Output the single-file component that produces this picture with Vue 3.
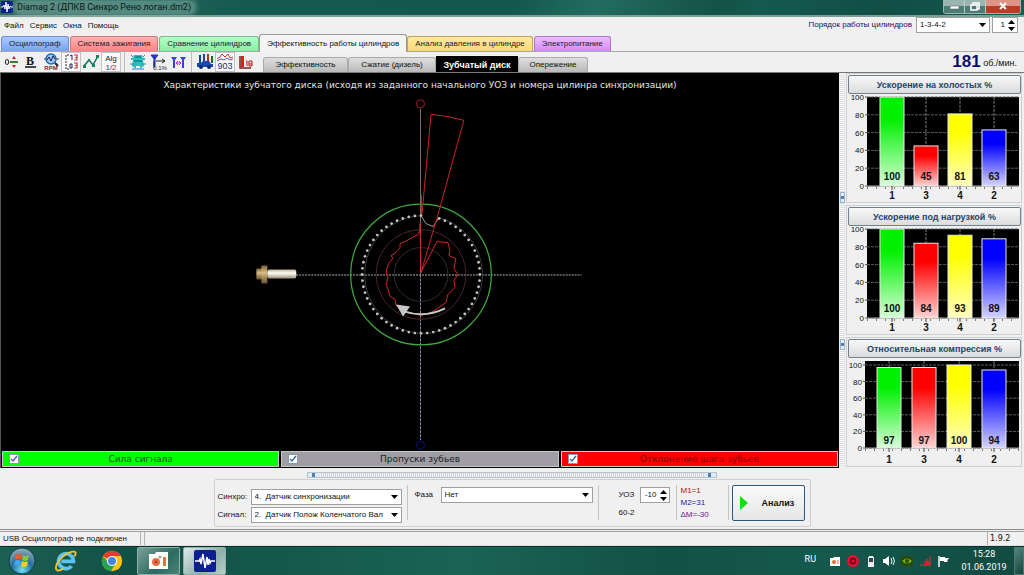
<script setup>
import { ref } from 'vue'

const mainTabs = [
  { name: 'Осциллограф', kind: 'blue' },
  { name: 'Система зажигания', kind: 'red' },
  { name: 'Сравнение цилиндров', kind: 'green' },
  { name: 'Эффективность работы цилиндров', kind: 'active' },
  { name: 'Анализ давления в цилиндре', kind: 'gold' },
  { name: 'Электропитание', kind: 'violet' }
]
const subTabs = [
  { name: 'Эффективность', size: 'w84' },
  { name: 'Сжатие (дизель)', size: 'w88' },
  { name: 'Зубчатый диск', size: 'w82', active: true },
  { name: 'Опережение', size: 'w70' }
]

const makeChart = (title, values, left, top, zero, xs) => {
  const k = (zero - top) / 100
  return {
    title,
    left,
    zero,
    plotTop: 3,
    ticks: [0, 20, 40, 60, 80, 100].map(v => ({ v, y: zero - v * k })),
    bars: values.map((v, i) => ({ v, x: xs[i], y: zero - v * k, h: v * k, cyl: [1, 3, 4, 2][i], fill: `url(#bar${i})` }))
  }
}
const charts = [
  makeChart('Ускорение на холостых %', [100, 45, 81, 63], 19, 3, 92, [32, 66, 100, 134]),
  makeChart('Ускорение под нагрузкой %', [100, 84, 93, 89], 19, 3, 92, [32, 66, 100, 134]),
  makeChart('Относительная компрессия %', [97, 97, 100, 94], 17, 7, 90, [29, 64, 99, 134])
]
const barColors = ['#00f000', '#f00', '#ff0', '#00f']
const barEnds = ['#d8ffd8', '#ffd4d4', '#ffffc0', '#d4d4ff']

const teeth = Array.from({ length: 58 }, (_, i) => {
  const a = ((i * 6 + 18) * Math.PI) / 180
  return { x: 59 * Math.sin(a), y: -59 * Math.cos(a) }
})

const legend = [
  { name: 'Сила сигнала', kind: 'lime' },
  { name: 'Пропуски зубьев', kind: 'gray' },
  { name: 'Отклонение шага зубьев', kind: 'crimson' }
]
const angle = ref(-10)
const order = ref(1)
</script>

<template>
  <div class="window">
    <header class="titlebar">
      <svg class="app-icon" viewBox="0 0 12 12"><rect width="12" height="12" rx="1" fill="#0a1f8c" /><path d="M0 6h2l1-2 1 4 1-7 1 10 1-8 1 5 1-3 1 1h2" fill="none" stroke="#fff" /></svg>
      <span class="caption">Diamag 2 (ДПКВ Синхро Рено логан.dm2)</span>
      <div class="win-buttons">
        <button aria-label="Свернуть"><svg viewBox="0 0 20 13"><rect x="6" y="6" width="9" height="3" fill="#fff" stroke="#455" stroke-width=".5" /></svg></button>
        <button aria-label="Восстановить"><svg viewBox="0 0 20 13"><path d="M8 5V3h6v6h-2M6 5h6v5H6z" fill="none" stroke="#fff" stroke-width="1.5" /></svg></button>
        <button class="close" aria-label="Закрыть"><svg viewBox="0 0 20 13"><path d="M7 3l6 6M13 3L7 9" stroke="#fff" stroke-width="2" /></svg></button>
      </div>
    </header>

    <div class="menu-row">
      <nav class="menu">
        <a href="#">Файл</a><a href="#">Сервис</a><a href="#">Окна</a><a href="#">Помощь</a>
      </nav>
      <label class="order-label" for="order">Порядок работы цилиндров</label>
      <span class="select order-select">
        <select id="order"><option>1-3-4-2</option></select>
        <svg viewBox="0 0 7 4"><path d="M0 0h7L3.500 4z" /></svg>
      </span>
      <span class="spin">
        <input v-model="order" type="text" aria-label="Номер цилиндра">
        <span class="spin-buttons">
          <button aria-label="Больше" @click="order++"><svg viewBox="0 0 7 4"><path d="M0 4h7L3.500 0z" /></svg></button>
          <button aria-label="Меньше" @click="order--"><svg viewBox="0 0 7 4"><path d="M0 0h7L3.500 4z" /></svg></button>
        </span>
      </span>
    </div>

    <nav class="tabs">
      <button v-for="t in mainTabs" :key="t.name" :class="['tab', t.kind]">{{ t.name }}</button>
    </nav>

    <div class="toolbar">
      <div class="tools">
        <button aria-label="Ноль">
          <svg viewBox="0 0 20 20"><ellipse cx="6" cy="10" rx="1.700" ry="2.500" fill="none" stroke="#222" /><path d="M9 10h8" stroke="#050" stroke-width="1.500" /><path d="M11 7h4l-2-3z" fill="#c22" /><path d="M11 13h4l-2 3z" fill="#c22" /></svg>
        </button>
        <button aria-label="Жирные линии">
          <svg viewBox="0 0 20 20"><text x="9" y="13" class="glyph-b">B</text><path d="M4 15h11" stroke="#111" stroke-width="1.500" /></svg>
        </button>
        <button aria-label="Обороты">
          <svg viewBox="0 0 20 20"><path d="M3 7h15" stroke="#247" /><circle cx="10" cy="7" r="5" fill="#9cc6ee" stroke="#246ba8" stroke-width="1.500" /><path d="M6 8l2-3 2 4 2-5 2 3" fill="none" stroke="#125" /><path d="M14 11l3 3" stroke="#222" stroke-width="2" /><text x="10" y="18" class="glyph-rpm">RPM</text></svg>
        </button>
        <button class="on" aria-label="Шкала">
          <svg viewBox="0 0 20 20"><path d="M8 3H5v14h3" fill="none" stroke="#223" stroke-dasharray="2 1" /><path d="M9 4l2-1v5" fill="none" stroke="#226" /><path d="M13 3h3v5h-3M14 5.500h2M13 11h3v5h-3M14 13.500h2" fill="none" stroke="#b33" stroke-width="1.200" /><path d="M9 12h2v4H9z" fill="none" stroke="#226" /></svg>
        </button>
        <button aria-label="Точки">
          <svg viewBox="0 0 20 20"><path d="M3 14l5-6 4 5 5-9" fill="none" stroke="#176b5b" stroke-width="1.500" /><path d="M2 13h3v3H2zM7 7h2v2H7zM11 12h3v3h-3zM15 3h3v3h-3z" fill="#185" /></svg>
        </button>
        <button class="on" aria-label="Алгоритм">
          <svg viewBox="0 0 20 20"><text x="10" y="9" class="glyph-alg">Alg</text><text x="10" y="18" class="glyph-alg"><tspan class="blue-text">1/</tspan><tspan class="red-text">2</tspan></text></svg>
        </button>
        <i class="split"></i>
        <button aria-label="Автомобиль">
          <svg viewBox="0 0 20 20"><path d="M6 3h8l1 3h2v2h-2l1 6-3 2H7l-3-2 1-6H3V6h2z" fill="#2cbcc0" /><path d="M7 5h6M6 9h8" stroke="#066" /><path d="M2 12h4M14 12h4M3 3l2 2M17 3l-2 2" stroke="#199" /><path d="M8 14h4v2H8z" fill="#efffff" /><path d="M4 17h12" stroke="#27c" /></svg>
        </button>
        <button aria-label="Время">
          <svg viewBox="0 0 20 20"><path d="M3 3h7L7 7v7H6V7z" fill="#23c" stroke="#23c" /><path d="M8 9h9M14 7l3 2-3 2M6 9v7" fill="none" stroke="#222" /><text x="12" y="18" class="glyph-tiny">0,1%</text></svg>
        </button>
        <button aria-label="Интервал">
          <svg viewBox="0 0 20 20"><path d="M3 5h6L7 8v8H5V8zM12 5h6l-2 3v8h-2V8z" fill="#34d" /><path d="M8 11h5M10 9l-2 2 2 2M11 9l2 2-2 2" fill="none" stroke="#c2c" /></svg>
        </button>
        <i class="split"></i>
        <button aria-label="Эффективность цилиндров">
          <svg viewBox="0 0 20 20"><path d="M4 3h2v8H4z" fill="#148" /><path d="M8 2h2v8H8z" fill="#24a" /><path d="M12 2h2v8h-2z" fill="#a32" /><path d="M16 4h2v7h-2z" fill="#262" /><path d="M2 11h4l2-2h6l2 3h2v3H2z" fill="#1449b5" /><circle cx="6" cy="15" r="2" fill="#0c2a70" /><circle cx="14" cy="15" r="2" fill="#0c2a70" /></svg>
        </button>
        <button class="on" aria-label="Обороты на графике">
          <svg viewBox="0 0 20 20"><path d="M2 7l3-2 2-3 3 3 3-3 2 4 3-1" fill="none" stroke="#c33" /><path d="M2 9l4-2 3 1 3-2 3 2 3-1" fill="none" stroke="#55b" /><text x="10" y="17" class="glyph-903">903</text></svg>
        </button>
        <button aria-label="Диаграмма">
          <svg viewBox="0 0 20 20"><path d="M5 4v12h11" fill="none" stroke="#722" stroke-width="1.500" /><path d="M6 4h3v11H6z" fill="#e21b1b" /><path d="M11 9h1v5M14 9h3M14 9v5M17 9v5M14 12h3M14 14h3" fill="none" stroke="#b11" /></svg>
        </button>
      </div>
      <nav class="subtabs">
        <button v-for="t in subTabs" :key="t.name" :class="['subtab', t.size, { active: t.active }]">{{ t.name }}</button>
      </nav>
      <div class="rpm"><strong>181</strong> об./мин.</div>
    </div>

    <main class="work">
      <section class="plot">
        <h1>Характеристики зубчатого диска (исходя из заданного начального УОЗ и номера цилинра синхронизации)</h1>
        <svg class="dial" viewBox="-421 -178 840 354">
          <defs>
            <linearGradient id="steel" x1="0" y1="0" x2="0" y2="1"><stop offset="0" stop-color="#b9b09c" /><stop offset=".4" stop-color="#fffdf2" /><stop offset="1" stop-color="#9c917c" /></linearGradient>
            <linearGradient id="brass" x1="0" y1="0" x2="0" y2="1"><stop offset="0" stop-color="#7d6236" /><stop offset=".4" stop-color="#d8bd86" /><stop offset="1" stop-color="#6b5028" /></linearGradient>
          </defs>
          <g fill="none">
            <path d="M-125 .5H161" stroke="#b0b0b0" stroke-dasharray="2 1" />
            <path d="M-.5 -166V0" stroke="#8a6666" />
            <path d="M-.5 0V166" stroke="#9090a8" stroke-dasharray="3 1" />
            <circle cx="0" cy="0" r="27" stroke="#342b2b" />
            <circle cx="0" cy="0" r="45" stroke="#4b2525" />
            <circle cx="0" cy="0" r="70.500" stroke="#3fae3f" stroke-width="1.200" />
            <circle cx="-.5" cy="-171" r="4" stroke="#b01c24" />
            <circle cx="-.5" cy="171" r="4" stroke="#10107a" />
            <path d="M18 -57A59 59 0 1 1 0 -59" stroke="#3a3a3a" />
            <path d="M0 -59L5 -51 12 -48 18 -57" stroke="#999" />
            <path d="M.5 -80V-58M1 -60L10 -160.500Q27 -159 43 -154.500L17 -60 0-2" stroke="#c6222a" />
            <path d="M0 -2L16 -33 27 -32 29 -24 28 -19 35 -16 33 -6 37 0 33 6 34 13 27 20 25 28 18 33 10 38 0 41 -14 38 -25 31 -26 25 -31 22 -33 15 -35 10 -33 3 -35 -2 -34 -7 -32 -12 -28 -16 -30 -19 -25 -22 -21 -27 -21 -31 -14 -34 -9 -37 -3 -40 -1 -45 -1 -51 0-2" stroke="#d0262c" />
            <path d="M24 34Q4 44 -17 37" stroke="#c8c8c8" stroke-width="2" />
          </g>
          <circle v-for="(p, i) in teeth" :key="i" :cx="p.x" :cy="p.y" r="1.400" fill="#c0c0c0" />
          <path d="M-25 30L-11 32 -18 42z" fill="#c8c8c8" />
          <rect x="-165" y="-6" width="10" height="11" rx="1" fill="url(#brass)" />
          <rect x="-160" y="-9" width="6" height="18" fill="url(#brass)" />
          <rect x="-154" y="-5" width="29" height="9" rx="2" fill="url(#steel)" />
        </svg>
        <div class="legend">
          <label v-for="l in legend" :key="l.name" :class="l.kind">
            <span class="check"><input type="checkbox" checked><svg viewBox="0 0 10 10"><path d="M2 5l2 2 4-5" /></svg></span>
            <span class="legend-name">{{ l.name }}</span>
          </label>
        </div>
      </section>

      <div class="grip-col"><span></span><span></span></div>

      <aside class="side">
        <svg class="defs" aria-hidden="true"><defs>
          <linearGradient v-for="(c, i) in barColors" :id="'bar' + i" :key="c" x1="0" y1="0" x2="0" y2="1"><stop offset="0" :stop-color="c" /><stop offset=".25" :stop-color="c" /><stop offset="1" :stop-color="barEnds[i]" /></linearGradient>
        </defs></svg>
        <section v-for="c in charts" :key="c.title" class="panel">
          <button class="panel-title">{{ c.title }}</button>
          <svg class="chart" viewBox="0 0 173 108">
            <rect :x="c.left" :y="c.plotTop" :width="171 - c.left" :height="c.zero - c.plotTop" fill="#000" />
            <g v-for="t in c.ticks" :key="t.v">
              <path :d="`M${c.left} ${t.y}H171`" stroke="#5a5a5a" stroke-dasharray="3 1" />
              <path :d="`M${c.left - 2} ${t.y}h2`" stroke="#555" />
              <text :x="c.left - 3" :y="t.y + 3" class="tick">{{ t.v }}</text>
            </g>
            <path v-for="b in c.bars" :key="'g' + b.cyl" :d="`M${b.x + 12} 3V${c.zero}`" stroke="#777" stroke-dasharray="3 1" />
            <path :d="`M${c.left} ${c.zero}H171`" stroke="#888" />
            <path :d="`M${c.left} ${c.zero + 2}H171`" stroke="#777" stroke-width="2" stroke-dasharray="1 8" />
            <g v-for="b in c.bars" :key="b.cyl">
              <rect :x="b.x" :y="b.y" width="24" :height="b.h" :fill="b.fill" stroke="#e8e8e8" />
              <text :x="b.x + 12" y="86" class="value">{{ b.v }}</text>
              <path :d="`M${b.x + 12} ${c.zero}v4`" stroke="#444" />
              <text :x="b.x + 12" y="105" class="cyl">{{ b.cyl }}</text>
            </g>
          </svg>
        </section>
      </aside>
    </main>

    <section class="bottom">
      <div class="grip-row"><i></i><i></i></div>
      <form class="settings" @submit.prevent>
        <div class="pairs">
          <label for="sync">Синхро:</label>
          <span class="select"><select id="sync"><option>4.&nbsp; Датчик синхронизации</option></select><svg viewBox="0 0 7 4"><path d="M0 0h7L3.500 4z" /></svg></span>
          <label for="signal">Сигнал:</label>
          <span class="select"><select id="signal"><option>2.&nbsp; Датчик Полож Коленчатого Вал</option></select><svg viewBox="0 0 7 4"><path d="M0 0h7L3.500 4z" /></svg></span>
        </div>
        <i class="rule"></i>
        <div class="phase">
          <label for="phase">Фаза</label>
          <span class="select"><select id="phase"><option>Нет</option></select><svg viewBox="0 0 7 4"><path d="M0 0h7L3.500 4z" /></svg></span>
        </div>
        <i class="rule"></i>
        <div class="angle">
          <label for="angle">УОЗ</label>
          <span class="spin">
            <input id="angle" v-model="angle" type="text">
            <span class="spin-buttons">
              <button type="button" aria-label="Увеличить" @click="angle++"><svg viewBox="0 0 7 4"><path d="M0 4h7L3.500 0z" /></svg></button>
              <button type="button" aria-label="Уменьшить" @click="angle--"><svg viewBox="0 0 7 4"><path d="M0 0h7L3.500 4z" /></svg></button>
            </span>
          </span>
          <span>60-2</span>
        </div>
        <i class="rule"></i>
        <div class="marks"><span class="m1">M1=1</span><span class="m2">M2=31</span><span class="dm">ΔM=-30</span></div>
        <i class="rule"></i>
        <button class="analyse"><svg viewBox="0 0 8 14"><path d="M0 0l8 7-8 7z" fill="#13e013" /></svg><span>Анализ</span></button>
      </form>
    </section>

    <footer class="status">
      <span class="usb">USB Осциллограф не подключен</span>
      <span class="fill"></span>
      <span class="version">1.9.2</span>
    </footer>

    <div class="taskbar">
      <button class="launch orb" aria-label="Пуск">
        <svg viewBox="0 0 28 28"><defs><radialGradient id="orb" cx=".5" cy=".85" r=".8"><stop offset="0" stop-color="#6fe0f5" /><stop offset=".5" stop-color="#256f9c" /><stop offset="1" stop-color="#8fa9b5" /></radialGradient></defs><circle cx="14" cy="14" r="13" fill="url(#orb)" stroke="#0d3c4c" /><path d="M8 8q3-2 6 0l-1 5q-3-2-6 0z" fill="#ee5a24" /><path d="M15 8q3 2 6 0l-1 5q-3 2-6 0z" fill="#8cc63f" /><path d="M7 14q3-2 6 0l-1 5q-3-2-6 0z" fill="#3fa9f5" /><path d="M14 14q3 2 6 0l-1 5q-3 2-6 0z" fill="#fcd116" /></svg>
      </button>
      <button class="launch" aria-label="Internet Explorer">
        <svg viewBox="0 0 28 28"><path d="M20 19.500A8 8 0 1 1 22 14.500H9" fill="none" stroke="#5cc4f2" stroke-width="4" /><path d="M4 24Q1 19 9 11T23 4q3 1 0 5" fill="none" stroke="#f2c530" stroke-width="2" /><path d="M4 24q3 1 7-2" fill="none" stroke="#f2c530" stroke-width="2" /></svg>
      </button>
      <button class="launch" aria-label="Chrome">
        <svg viewBox="0 0 28 28"><circle cx="14" cy="14" r="11" fill="#fbc116" /><path d="M14 14L4.500 8.500A11 11 0 0 1 23.500 8.500H14z" fill="#e33b2e" /><path d="M4.500 8.500A11 11 0 0 0 13 25l5-9-4-2-4 2z" fill="#27a350" /><circle cx="14" cy="14" r="5.500" fill="#fff" /><circle cx="14" cy="14" r="4.300" fill="#4285e8" /></svg>
      </button>
      <button class="task" aria-label="Запись экрана">
        <svg viewBox="0 0 22 22"><path d="M1 4h6l1-2h12v17H1z" fill="#fff" /><circle cx="8" cy="12" r="4" fill="#e8703a" /><circle cx="8" cy="12" r="1.500" fill="#a43" /><circle cx="12" cy="7" r="1.500" fill="#8aa" /><rect x="15" y="7" width="3" height="9" fill="#e8703a" /></svg>
      </button>
      <button class="task current" aria-label="Diamag 2">
        <svg viewBox="0 0 22 22"><rect width="22" height="22" rx="2" fill="#0b1f92" /><path d="M1 11h4l1-2 1 5 2-10 2 14 2-11 1 8 1-6 1 4 1-2h4" fill="none" stroke="#fff" stroke-width="1.500" /></svg>
      </button>
      <div class="tray">
        <span class="lang">RU</span>
        <svg viewBox="0 0 14 14"><path d="M2 4h3l1-1h6v9H2z" fill="#fff" /><circle cx="6" cy="8" r="2" fill="#e86a35" /><path d="M10 6v4" stroke="#e86a35" /></svg>
        <svg viewBox="0 0 14 14"><circle cx="7" cy="7" r="6" fill="#df1236" /><circle cx="7" cy="7" r="2.500" fill="none" stroke="#6d0015" stroke-width="1.500" /></svg>
        <svg viewBox="0 0 14 14"><path d="M5 3V2h4v1h1v10H4V3z" fill="#eee" /><path d="M5 4h4v4H5z" fill="#345" /></svg>
        <svg viewBox="0 0 14 14"><path d="M1 5h2l4-3v10L3 9H1z" fill="#fff" /><path d="M9 4q2 3 0 6M11 3q3 4 0 8" fill="none" stroke="#dff" /></svg>
        <svg viewBox="0 0 14 14"><rect x="1" y="2" width="12" height="10" fill="#294a0c" /><path d="M2 7q5-5 10 0-5 5-10 0z" fill="#75b900" /><circle cx="7" cy="7" r="2" fill="#294a0c" /></svg>
        <svg viewBox="0 0 14 14"><path d="M2 12v-2h2v2zM5 12V8h2v4zM8 12V5h2v7zM11 12V2h2v10z" fill="#8a3a3a" /><path d="M7 7l5 5M12 7l-5 5" stroke="#e3212f" stroke-width="1.500" /></svg>
        <svg viewBox="0 0 14 14"><path d="M3 2v11" stroke="#fff" stroke-width="1.500" /><path d="M4 3h5v1h4l-2 3 1 1H8V7H4z" fill="#fff" /></svg>
        <time class="clock"><span>15:28</span><span>01.06.2019</span></time>
        <button class="show-desktop" aria-label="Свернуть все окна"></button>
      </div>
    </div>
  </div>
</template>

<style>
html, body { background: #f0f0f0; }
</style>

<style scoped>
* { box-sizing: border-box; }
.window {
  min-height: 100vh;
  display: flex;
  flex-direction: column;
  background: #f0f0f0;
  color: #111;
  font: 8px/12px "Liberation Sans", Arial, sans-serif;
}
button, input, select { font: inherit; color: inherit; margin: 0; padding: 0; }
button { border: 0; background: none; }
a { color: inherit; text-decoration: none; }
svg { display: block; }

.titlebar {
  display: flex;
  align-items: center;
  height: 17px;
  flex: none;
  padding: 0 3px 1px 1px;
  border-bottom: 2px solid #7c9e99;
  background: linear-gradient(115deg, #2e685f 0, #145a50 25%, #13584e 50%, #236b60 58%, #135248 70%, #145a50 74%, #104e46 86%, #145a50 100%);
}
.app-icon { width: 12px; height: 12px; margin-right: 2px; }
.caption {
  font: 9px/13px Roboto, sans-serif;
  color: #0a1614;
  padding: 0 4px 0 2px;
  background: rgba(160, 200, 190, .4);
  border-radius: 6px;
  box-shadow: 0 0 5px 2px rgba(160, 200, 190, .4);
}
.win-buttons { margin-left: auto; align-self: flex-start; display: flex; border: 1px solid #9bb5b0; border-top: 0; border-radius: 0 0 3px 3px; overflow: hidden; }
.win-buttons button { width: 21px; height: 13px; display: flex; justify-content: center; background: linear-gradient(#9bb5af 45%, #4e7c73 50%); border-right: 1px solid #b7cbc7; }
.win-buttons svg { width: 20px; height: 13px; }
.win-buttons .close { width: 34px; border: 0; background: linear-gradient(#dd9484 45%, #bf3a23 50%); }

.menu-row { display: flex; align-items: flex-start; height: 17px; padding-right: 6px; }
.menu { display: flex; gap: 6px; padding: 3px 4px; margin-right: auto; }
.order-label { color: #14145e; padding: 2px 4px 0 0; }
.select { position: relative; display: block; }
.select select {
  display: block;
  width: 100%;
  height: 16px;
  padding: 0 14px 0 3px;
  border: 1px solid #a0a0a0;
  border-radius: 0;
  background: #fff;
  appearance: none;
  color: #111;
}
.select svg { position: absolute; right: 4px; top: 6px; width: 7px; height: 4px; pointer-events: none; }
.order-select { width: 74px; margin-right: 2px; }
.spin { display: flex; height: 16px; border: 1px solid #a0a0a0; background: #fff; }
.spin input { width: 12px; border: 0; background: none; text-align: right; outline: 0; }
.spin-buttons { display: flex; flex-direction: column; justify-content: center; gap: 3px; width: 12px; padding-left: 3px; }
.spin-buttons button, .spin-buttons svg { width: 7px; height: 4px; }

.tabs { display: flex; align-items: flex-end; height: 18px; padding-left: 1px; border-bottom: 1px solid #a8a8a8; }
.tab { height: 15px; padding: 0 7px; margin-right: 1px; border: 1px solid #999; border-bottom: 0; border-radius: 3px 3px 0 0; color: #1a1a30; white-space: nowrap; }
.tab.blue { background: linear-gradient(#a9caff, #78a3f4); border-color: #6e8fcc; }
.tab.red { background: linear-gradient(#ffb0b0, #ff8484); border-color: #c87c7c; }
.tab.green { background: linear-gradient(#b2ffc6, #86f0a2); border-color: #79b98a; margin-right: 0; }
.tab.active { height: 18px; margin: 0 0 -1px; background: #f4f4f4; color: #111; }
.tab.gold { background: linear-gradient(#ffe9a0, #fbd973); border-color: #bfa55a; }
.tab.violet { background: linear-gradient(#ecbcff, #d58cfb); border-color: #a878c0; }

.toolbar { display: flex; height: 21px; align-items: stretch; border-bottom: 1px solid #777; }
.tools { display: flex; padding-left: 1px; }
.tools button { width: 20px; height: 20px; }
.tools svg { width: 20px; height: 20px; }
.tools .on { background: #fafafa; border: 1px solid #c2c2c2; }
.tools .on svg { margin: -1px; }
.split { width: 7px; background: linear-gradient(90deg, transparent 3px, #bbb 3px, #bbb 4px, transparent 4px); }
.glyph-b { font: bold 12px "Liberation Serif", serif; text-anchor: middle; fill: #111; }
.glyph-rpm { font: bold 6px "Liberation Sans", sans-serif; text-anchor: middle; fill: #a02020; }
.glyph-alg { font: 8px "Liberation Sans", sans-serif; text-anchor: middle; fill: #222; }
.blue-text { fill: #223a7a; }
.red-text { fill: #a02a2a; }
.glyph-tiny { font: 6px "Liberation Sans", sans-serif; text-anchor: middle; fill: #222; }
.glyph-903 { font: 9px "Liberation Sans", sans-serif; text-anchor: middle; fill: #1c2a7a; }
.subtabs { display: flex; align-items: flex-end; margin-left: 8px; flex: 1; }
.subtab { height: 15px; border: 1px solid #aaa; border-bottom: 0; border-radius: 3px 3px 0 0; background: linear-gradient(#dedede, #b9b9b9); white-space: nowrap; }
.subtab.active { background: #000; color: #fff; font-weight: bold; font-size: 9px; border-color: #000; border-radius: 0; height: 16px; }
.w84 { width: 85px; }
.w88 { width: 88px; }
.w82 { width: 82px; }
.w70 { width: 70px; }
.rpm { padding: 0 7px 0 0; font-size: 9px; line-height: 20px; }
.rpm strong { font-size: 17px; color: #0d0d6b; vertical-align: -1px; }

.work { display: flex; flex: 1; }
.plot { flex: 1; min-width: 0; display: flex; flex-direction: column; background: #000; border-left: 1px solid #555; }
.plot h1 { margin: 0; padding: 5px 0 3px; text-align: center; font: 9px/15px "DejaVu Sans", Verdana, sans-serif; color: #e4e4e4; white-space: nowrap; }
.dial { flex: 1; min-height: 0; width: 100%; }
.legend { display: grid; grid-template-columns: repeat(3, 1fr); gap: 2px; padding: 0 1px 1px; }
.legend label { display: flex; align-items: center; height: 16px; border: 1px solid #c8c8c8; padding: 0 16px 0 6px; font: 9px/14px "DejaVu Sans", Verdana, sans-serif; }
.legend-name { flex: 1; text-align: center; }
.lime { background: #0f0; color: #064a06; }
.gray { background: #a09ea4; color: #222; }
.crimson { background: #f00; color: #7a0000; }
.check { position: relative; width: 10px; height: 10px; }
.check input { appearance: none; display: block; width: 10px; height: 10px; margin: 0; background: #fff; border: 1px solid #8a9aa8; }
.check svg { position: absolute; inset: 0; pointer-events: none; }
.check path { fill: none; stroke: #3a6ea8; stroke-width: 1.5; }

.grip-col { width: 7px; display: flex; flex-direction: column; justify-content: center; gap: 136px; background: repeating-linear-gradient(#f6f6f6 0 1px, #d9dde2 1px 2px); border: 1px solid #eee; }
.grip-col span { height: 11px; border: 1px solid #9db4c8; background: linear-gradient(#e4eef6 3px, #4d80b0 3px, #4d80b0 6px, #e4eef6 6px); }
.side { width: 178px; display: flex; flex-direction: column; gap: 2px; padding-right: 2px; }
.defs { position: absolute; width: 0; height: 0; }
.panel { border: 1px solid #cfcfcf; padding: 1px 0 0 1px; height: 130px; }
.panel-title { display: block; width: 100%; height: 19px; border: 1px solid #73808c; border-radius: 2px; background: linear-gradient(#f8f8f8, #dcdcdc); color: #23456c; font-weight: bold; font-size: 9px; }
.chart { width: 100%; height: 108px; }
.tick { font: 8px "Liberation Sans", sans-serif; text-anchor: end; fill: #111; }
.value, .cyl { font: bold 10px "Liberation Sans", sans-serif; text-anchor: middle; fill: #111; }

.bottom { display: flex; flex-direction: column; align-items: center; padding: 4px 0 2px; border-bottom: 1px solid #8c8c8c; }
.grip-row { display: flex; justify-content: space-between; width: 410px; height: 6px; margin-bottom: 1px; border: 1px solid #b8c4d0; background: repeating-linear-gradient(90deg, #f6f6f6 0 1px, #cdd2d8 1px 2px); }
.grip-row i { width: 12px; background: linear-gradient(90deg, #dfeaf4 4px, #4d80b0 4px, #4d80b0 7px, #dfeaf4 7px); }
.settings { display: flex; height: 48px; padding: 3px 5px 3px 3px; border: 1px solid #cfcfcf; border-radius: 2px; }
.rule { width: 1px; margin: 2px 0 3px; background: #c4c4c4; }
.pairs { display: grid; grid-template-columns: 30px 151px; column-gap: 3px; row-gap: 2px; align-content: end; align-items: center; margin-right: 5px; }
.phase { display: flex; align-items: flex-start; gap: 8px; padding: 4px 5px 0 7px; }
.phase label { width: 18px; padding-top: 2px; }
.phase .select { width: 152px; }
.angle { display: grid; grid-template-columns: 17px 30px; grid-template-rows: 16px 20px; column-gap: 4px; align-items: center; padding: 4px 6px 0 20px; white-space: nowrap; }
.angle .spin input { width: 16px; }
.marks { display: flex; flex-direction: column; width: 51px; padding: 2px 0 0 4px; }
.m1 { color: #a81414; }
.m2 { color: #1a1aa8; }
.dm { color: #6d1296; }
.analyse { display: flex; align-items: center; gap: 14px; width: 73px; height: 36px; margin: 2px 0 0 3px; padding: 0 8px 0 7px; border: 1px solid #2c5684; border-radius: 2px; background: linear-gradient(#fafafa, #e6e6e6); font-weight: bold; font-size: 9px; }
.analyse svg { width: 8px; height: 14px; }

.status { display: flex; height: 15px; margin-top: 1px; border-top: 1px solid #a0a0a0; border-bottom: 1px solid #ddd; line-height: 13px; }
.usb { width: 141px; padding-left: 3px; border-right: 1px solid #b5b5b5; white-space: nowrap; }
.fill { flex: 1; margin-left: 3px; border-left: 1px solid #b5b5b5; }
.version { width: 37px; padding-left: 2px; border-left: 1px solid #b5b5b5; font-family: "DejaVu Sans", sans-serif; }

.taskbar { display: flex; align-items: center; height: 29px; border-top: 1px solid #0b332d; background: linear-gradient(90deg, #1c6054 0, #125046 12%, #155a4f 30%, #1b6356 45%, #125148 65%, #15594e 80%, #114a42 100%); color: #fff; }
.launch { width: 46px; height: 28px; display: flex; align-items: center; justify-content: center; }
.launch svg { width: 26px; height: 26px; }
.orb { width: 43px; }
.orb svg { width: 28px; height: 28px; }
.task { width: 43px; height: 28px; margin: 0 1px 0 2px; display: flex; align-items: center; justify-content: center; border: 1px solid #8fb0a9; border-radius: 2px; background: linear-gradient(135deg, #7ba098, #2c6b60 60%, #4d8278); }
.task.current { background: linear-gradient(135deg, #dfe9e7, #8eb0aa 60%, #b9cfcb); }
.task svg { width: 22px; height: 22px; }
.tray { margin-left: auto; display: flex; align-items: center; gap: 4px; font: 9px/13px Roboto, "Open Sans", sans-serif; }
.tray svg { width: 14px; height: 14px; }
.lang { margin-right: 8px; padding-bottom: 4px; }
.clock { display: flex; flex-direction: column; align-items: center; width: 52px; margin-left: 4px; }
.show-desktop { width: 10px; height: 28px; border: 1px solid #4b7a72; background: linear-gradient(135deg, #54857c, #15443d); }
</style>
